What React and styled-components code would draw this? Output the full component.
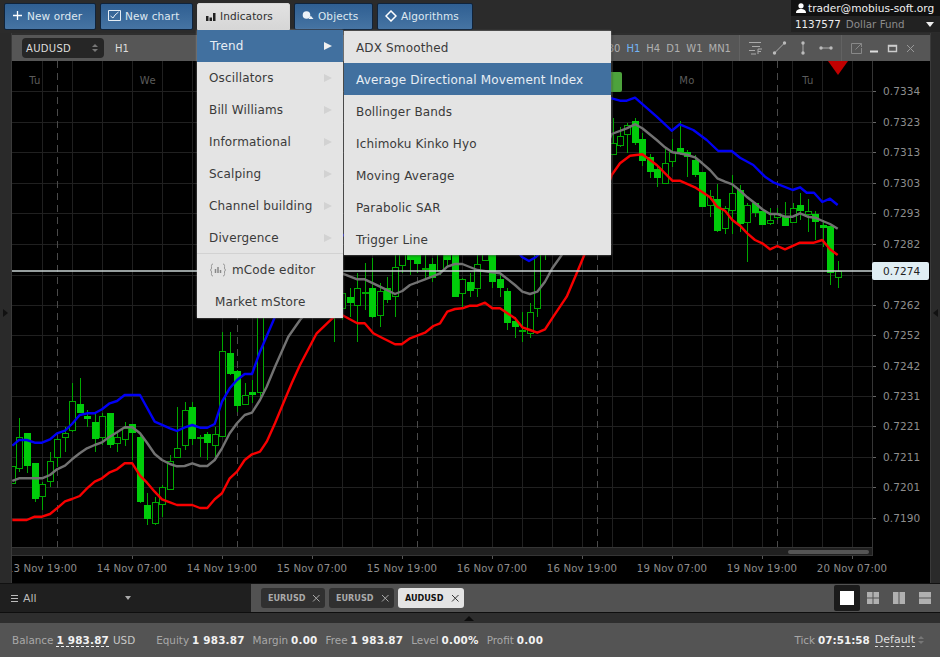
import React from 'react';
import styled, { createGlobalStyle } from 'styled-components';

const Global = createGlobalStyle`
  html, body { margin: 0; padding: 0; background: #2a2a2a; }
  * { box-sizing: border-box; }
  body { font-family: "DejaVu Sans", Verdana, sans-serif; }
`;

const Page = styled.div`
  position: relative; width: 940px; height: 657px; overflow: hidden;
  display: flex; flex-direction: column; background: #2a2a2a;
`;
const TopBar = styled.header`
  height: 33px; flex: none; display: flex; justify-content: space-between;
  background: #2b2b2b;
`;
const ToolButtons = styled.nav`
  display: flex; gap: 4px; padding: 3px 0 0 4px; align-items: flex-start;
`;
const ToolButton = styled.div`
  width: ${p => p.$w}px; height: 27px; display: flex; align-items: center; gap: 4px;
  padding: 0 0 2px ${p => p.$pad || 7}px; font-size: 10.5px; letter-spacing: 0.1px; white-space: nowrap;
  border-radius: ${p => (p.$open ? '2px 2px 0 0' : '2px')};
  color: ${p => (p.$open ? '#2e2e2e' : '#dfe8f0')};
  background: ${p => (p.$open ? 'linear-gradient(#e2e2e2,#d6d6d6)' : 'linear-gradient(#2f5f92,#4674a3)')};
  border: 1px solid ${p => (p.$open ? '#d8d8d8' : '#10233a')};
`;
const Account = styled.div`
  width: 149px; height: 32px; display: flex; flex-direction: column; font-size: 10.3px; background: #222;
`;
const AccountUser = styled.div`
  height: 16px; background: #111; color: #f0f0f0; display: flex; align-items: center; gap: 2px; padding-left: 5px; font-size: 10.6px; white-space: nowrap;
`;
const AccountFund = styled.div`
  height: 16px; color: #8c8c8c; display: flex; align-items: center; padding: 0 6px 0 4px; gap: 5px; position: relative; white-space: nowrap;
  b { color: #eee; font-weight: 400; }
  i { margin-left: auto; width: 0; height: 0; border: 4px solid transparent; border-top: 5px solid #eee; border-bottom: 0; }
`;
const Main = styled.main`
  height: 550px; flex: none; display: flex; background: #2e2e2e;
`;
const SideStrip = styled.aside`
  width: ${p => p.$w}px; flex: none; display: flex; align-items: flex-end; justify-content: center;
  padding-bottom: 266px; background: #2a2a2a; border-${p => p.$side}: 1px solid #3a3a3a;
  i { width: 0; height: 0; border: 4px solid transparent; border-${p => (p.$side === 'right' ? 'left' : 'right')}: 5px solid #111; border-${p => p.$side}: 0; }
`;
const ChartWindow = styled.section`
  flex: 1; margin-top: 2px; display: flex; flex-direction: column; min-width: 0; background: #000;
`;
const WindowHead = styled.div`
  height: 26px; flex: none; display: flex; align-items: center; background: #565656; color: #c8c8c8; font-size: 10px;
`;
const SymbolSelect = styled.div`
  width: 82px; height: 20px; margin-left: 10px; border-radius: 4px; background: #262626; color: #ddd; display: flex; align-items: center;
  justify-content: space-between; padding: 0 6px 0 4px; font-size: 10px; letter-spacing: .3px;
`;
const Updown = styled.span`
  display: flex; flex-direction: column; gap: 2px;
  &::before, &::after { content: ''; width: 0; height: 0; border: 3px solid transparent; }
  &::before { border-bottom: 3px solid #777; border-top: 0; }
  &::after { border-top: 3px solid #777; border-bottom: 0; }
`;
const Frame = styled.span`
  margin-left: 11px; color: #ddd;
`;
const Timeframes = styled.div`
  margin-left: auto; display: flex; gap: 6px; padding-right: 8px; height: 26px; align-items: center; border-right: 1px solid #626262;
`;
const Tf = styled.span`
  color: ${p => (p.$on ? '#72b4f5' : '#b0b0b0')};
`;
const DrawTools = styled.div`
  display: flex; align-items: center; height: 26px; border-right: 1px solid #626262; padding: 0 8px 0 9px; gap: 9px;
`;
const WinTools = styled.div`
  display: flex; align-items: center; height: 26px; padding: 0 14px 0 9px; gap: 7px;
`;
const Chart = styled.svg`
  display: block; width: 918px; height: 522px; flex: none; font-family: "DejaVu Sans", sans-serif;
`;
const Tabs = styled.div`
  height: 30px; flex: none; display: flex; border-top: 1px solid #111; border-bottom: 1px solid #0e0e0e;
`;
const FilterBox = styled.div`
  width: 251px; flex: none; background: #1f1f1f; color: #bbb; display: flex; align-items: center; padding-left: 11px; gap: 5px; font-size: 11px;
  i { margin-left: 83px; width: 0; height: 0; border: 3.5px solid transparent; border-top: 4px solid #aaa; border-bottom: 0; }
`;
const Burger = styled.span`
  width: 7px; height: 7px; border-top: 1px solid #bbb; border-bottom: 1px solid #bbb; position: relative;
  &::after { content: ''; position: absolute; left: 0; right: 0; top: 2px; height: 1px; background: #bbb; }
`;
const TabRail = styled.div`
  flex: 1; background: #525252; display: flex; align-items: center; padding: 0 0 0 10px; gap: 4px;
`;
const Tab = styled.div`
  width: ${p => p.$w}px; height: 20px; border-radius: 3px; display: flex; align-items: center; justify-content: space-between; padding: 0 4px 0 7px;
  font: bold 9px "DejaVu Sans Condensed", "Liberation Sans", sans-serif;
  background: ${p => (p.$on ? '#e4e4e4' : '#303030')}; color: ${p => (p.$on ? '#111' : '#aaa')};
`;
const Layouts = styled.div`
  margin-left: auto; display: flex; align-items: center; height: 28px; padding-right: 2px;
`;
const LayoutBtn = styled.div`
  width: 26px; height: 26px; display: flex; align-items: center; justify-content: center; border-radius: 2px;
  background: ${p => (p.$on ? '#1b1b1b' : 'transparent')};
`;
const Thin = styled.div`
  height: 10px; flex: none; background: #2e2e2e; display: flex; justify-content: center; padding: 3px 1px 0 0;
  i { width: 0; height: 0; border: 5px solid transparent; border-bottom: 5px solid #0d0d0d; border-top: 0; margin-left: -2px; }
`;
const Status = styled.footer`
  flex: 1; background: #545454; display: flex; align-items: center; padding: 0 0 0 12px; font-size: 10.4px; color: #a8a8a8; white-space: nowrap;
`;
const Stat = styled.span`
  margin-right: ${p => p.$gap || 8}px;
  b { color: #f2f2f2; font-weight: 700; margin-left: 3px; letter-spacing: .2px; ${p => p.$dash && 'border-bottom: 1px dashed #eee;'} }
  em { font-style: normal; color: #c8c8c8; margin-left: 4px; }
`;
const Tick = styled.span`
  margin-left: auto; color: #a8a8a8;
  b { color: #f2f2f2; margin-left: 3px; }
`;
const DefaultPick = styled.span`
  margin: 0 16px 0 5px; color: #ddd; display: flex; align-items: center; gap: 3px; font-size: 11px;
  u { text-decoration: none; border-bottom: 1px dashed #ddd; }
`;
const Menu = styled.div`
  position: absolute; left: ${p => p.$x}px; top: ${p => p.$y}px; width: ${p => p.$w}px;
  background: #e4e4e4; box-shadow: 0 0 2px rgba(255,255,255,.5), 1px 1px 2px rgba(0,0,0,.5);
  font-size: 12px; color: #333; letter-spacing: .15px;
`;
const MenuItem = styled.div`
  height: 32px; display: flex; align-items: center; gap: 5px; white-space: nowrap;
  padding: ${p => (p.$sub ? 1 : 0)}px 0 ${p => (p.$sub ? 0 : 1)}px ${p => p.$pad}px;
  background: ${p => (p.$on ? '#41709f' : 'transparent')}; color: ${p => (p.$on ? '#e8eef4' : '#3a3a3a')};
`;
const SubArrow = styled.i`
  margin-left: auto; margin-right: 11px; width: 0; height: 0; border: 4px solid transparent; border-right: 0;
  border-left: 8px solid ${p => (p.$on ? '#f0f0f0' : '#d2d2d2')};
`;
const MenuRule = styled.div`
  height: 1px; margin-top: -1px; background: #d2d2d2;
`;
const IconSvg = styled.svg`
  flex: none; display: block;
`;

const pts = (ox, oy, a) => a.map(([x, y]) => [ox + x / 3, oy + y / 3]);
const blue = [
  ...pts(0, 300, [[37,437],[57,420],[80,420],[104,428],[126,428],[150,418],[171,400],[195,392],[216,372],[239,345],[261,340],[284,340],[306,328],[329,310],[351,303],[374,285],[420,285],[464,365],[510,385],[531,393],[554,382],[577,375],[600,383],[622,383],[644,372],[666,305],[689,265],[711,240],[734,222],[756,222],[780,155],[825,50]]),
  [343,235],[515,248],[522,257],[529,261],[536,257],[545,248],[590,110],
  ...pts(610, 60, [[5,115],[30,122],[50,122],[75,113],[140,170],[185,212],[209,193],[250,210],[290,240],[325,273],[365,273],[390,293],[430,315],[465,350],[490,367],[548,390],[570,382],[590,398],[612,398],[637,426],[660,416],[683,435]]),
];
const gray = [
  ...pts(0, 300, [[37,543],[57,535],[126,535],[150,525],[171,508],[195,497],[216,478],[239,460],[261,445],[284,435],[306,427],[329,410],[351,397],[374,382],[397,382],[420,400],[441,428],[464,462],[486,480],[510,492],[531,499],[554,498],[577,490],[600,498],[622,498],[644,480],[666,445],[689,400],[711,370],[734,345],[756,338],[780,300],[800,260],[825,200],[865,110],[900,60]]),
  ...pts(300, 240, [[126,100],[172,118],[194,118],[240,140],[285,162],[307,153],[330,135],[375,118],[420,100],[442,80],[465,72],[487,72],[532,90],[577,97],[600,100],[645,135],[667,155],[690,162],[712,155],[735,125],[757,85],[785,45]]),
  ...pts(610, 60, [[5,222],[50,205],[75,193],[97,205],[140,240],[165,262],[187,277],[209,280],[232,285],[255,292],[277,310],[300,330],[322,355],[345,365],[367,373],[390,392],[412,412],[435,430],[457,448],[480,462],[502,462],[525,470],[548,470],[570,460],[593,470],[615,473],[638,483],[660,492],[683,506]]),
];
const red = [
  ...pts(0, 300, [[37,660],[80,660],[104,650],[126,650],[150,642],[171,625],[195,604],[216,597],[239,588],[261,565],[284,545],[306,535],[329,517],[351,508],[374,490],[397,490],[420,527],[441,548],[464,575],[486,598],[510,607],[531,615],[577,615],[600,624],[622,624],[644,598],[666,580],[689,535],[711,515],[734,480],[756,463],[780,455],[800,425],[825,370],[850,310],[875,250],[900,195]]),
  ...pts(300, 240, [[50,280],[100,232],[126,225],[172,250],[194,250],[220,280],[240,290],[285,313],[305,313],[330,295],[375,278],[400,258],[420,250],[442,215],[465,207],[487,205],[510,197],[532,197],[555,188],[577,205],[600,205],[645,235],[667,262],[690,270],[712,278],[735,268],[760,230],[800,170],[830,100],[855,40]]),
  ...pts(610, 60, [[5,345],[30,310],[60,287],[97,283],[140,315],[187,362],[209,362],[255,382],[300,412],[322,440],[345,452],[367,480],[390,497],[412,520],[435,540],[457,550],[480,568],[502,558],[525,568],[570,548],[612,548],[637,540],[660,568],[683,585]]),
];

// [x, high, low, bodyTop, bodyBottom, filled] in zoomed-crop units
const candlesA = [[37,498,552,498,550,0],[57,355,515,410,505,0],[80,400,518,400,498,1],[104,488,605,490,597,1],[126,545,630,553,588,0],[150,455,560,482,543,0],[171,415,500,418,470,0],[195,380,455,400,410,0],[216,250,395,304,390,0],[239,233,340,312,338,1],[261,330,380,348,357,1],[284,340,455,365,417,1],[306,340,435,348,410,0],[329,338,445,338,435,1],[351,395,455,410,428,0],[374,365,438,385,417,0],[397,375,480,373,400,1],[420,405,610,410,605,1],[441,580,675,615,658,1],[464,590,675,606,668,0],[486,555,650,562,612,0],[509,465,570,482,568,0],[531,320,475,445,472,0],[554,305,450,330,435,0],[577,305,435,320,417,1],[600,405,472,410,411,0],[622,395,480,402,428,1],[644,380,480,402,436,0],[666,97,410,152,407,0],[689,97,225,160,222,1],[711,210,335,213,318,1],[734,250,312,286,312,0],[756,240,310,276,286,1],[780,-100,290,-20,275,0]];
const candlesB = [[103,30,305,60,180,1],[126,110,240,160,205,0],[150,145,230,170,188,1],[172,100,305,145,195,0],[194,70,210,155,156,0],[216,55,235,145,232,1],[240,130,260,153,225,0],[262,110,190,145,180,1],[285,20,230,82,168,0],[307,20,100,20,75,0],[330,20,105,20,60,1],[352,20,100,20,72,1],[375,20,115,83,84,0],[397,55,125,72,115,1],[420,20,105,20,90,0],[442,20,80,20,60,1],[465,20,170,20,170,1],[487,115,205,118,160,0],[510,100,170,125,152,1],[532,45,170,72,145,0],[555,20,60,20,60,0],[577,20,145,20,125,1],[600,100,170,117,145,1],[622,145,270,152,250,1],[645,230,293,242,262,1],[667,215,305,270,271,0],[690,190,295,215,278,0],[712,20,230,20,205,0],[735,0,60,0,40,1]];
const candlesC = [[8,175,285,248,282,0],[30,200,262,228,256,0],[52,190,280,195,222,0],[75,175,255,183,248,1],[97,220,318,238,302,1],[120,283,355,292,335,1],[142,315,382,328,354,1],[165,268,372,310,370,0],[187,238,320,276,302,0],[209,183,285,265,283,1],[232,270,352,275,292,1],[255,285,352,300,345,1],[277,336,441,336,441,1],[300,390,470,408,434,0],[322,372,515,416,514,1],[345,438,522,443,505,0],[367,345,522,398,450,0],[390,375,515,390,493,1],[412,430,605,435,487,0],[435,425,470,428,460,1],[457,452,495,452,495,1],[480,445,495,480,490,0],[502,443,480,460,470,0],[525,425,498,470,497,1],[548,428,490,443,487,0],[570,398,480,434,452,1],[593,418,515,452,462,0],[615,452,540,461,487,1],[638,480,560,496,505,1],[660,497,675,497,638,1],[683,603,683,632,650,0]];
const toCandles = (ox, oy, list) => list.map(([x, h, l, t, b, f]) => ({
  x: Math.round(ox + x / 3), h: oy + h / 3, l: oy + l / 3, t: Math.round(oy + t / 3), b: Math.round(oy + b / 3), f,
}));
const candles = [...toCandles(0, 300, candlesA), ...toCandles(300, 240, candlesB), ...toCandles(610, 60, candlesC)];

const hGrid = [91, 122, 152, 183, 213, 244, 275, 305, 335, 366, 396, 426, 457, 487, 518];
const prices = [['0.7334',91],['0.7323',122],['0.7313',152],['0.7303',183],['0.7293',213],['0.7282',244],['0.7262',305],['0.7252',335],['0.7242',366],['0.7231',396],['0.7221',426],['0.7211',457],['0.7201',487],['0.7190',518]];
const vGrid = Array.from({ length: 28 }, (_, i) => 42 + i * 30);
const dashes = [57, 237, 417, 597, 777];
const times = [['13 Nov 19:00',42],['14 Nov 07:00',132],['14 Nov 19:00',222],['15 Nov 07:00',312],['15 Nov 19:00',402],['16 Nov 07:00',492],['16 Nov 19:00',582],['19 Nov 07:00',672],['19 Nov 19:00',762],['20 Nov 07:00',852]];
const days = [['Tu',35],['We',148],['Mo',687],['Tu',808]];
const poly = a => a.map(p => p.map(n => n.toFixed(1)).join(',')).join(' ');

function ChartPlot() {
  return (
    <Chart viewBox="12 61 918 522">
      <rect x="12" y="61" width="918" height="522" fill="#000" />
      <g stroke="#202020" strokeWidth="1" shapeRendering="crispEdges">
        {hGrid.map(y => <line key={y} x1="12" x2="872" y1={y + .5} y2={y + .5} />)}
        {vGrid.map(x => <line key={x} x1={x + .5} x2={x + .5} y1="61" y2="547" />)}
      </g>
      <g stroke="#4a4a4a" strokeDasharray="7 5" shapeRendering="crispEdges">
        {dashes.map(x => <line key={x} x1={x + .5} x2={x + .5} y1="61" y2="547" />)}
      </g>
      {days.map(([t, x]) => <text key={x + t} x={x} y="84" textAnchor="middle" fontSize="10" fill="#5c5c5c" letterSpacing=".4">{t}</text>)}
      <rect x="590" y="72" width="32" height="20" rx="2" fill="#4da23c" />
      <g shapeRendering="crispEdges">
        {candles.map((c, i) => (
          <g key={i}>
            <line x1={c.x + .5} x2={c.x + .5} y1={c.h} y2={c.l} stroke="#00a800" />
            {c.f
              ? <rect x={c.x - 3} y={c.t} width="7" height={Math.max(c.b - c.t, 1)} fill="#00cc0a" />
              : <rect x={c.x - 2.5} y={c.t + .5} width="6" height={Math.max(c.b - c.t, 1)} fill="#000" stroke="#00a800" />}
          </g>
        ))}
      </g>
      <polyline points={poly(blue)} fill="none" stroke="#0000f5" strokeWidth="2.4" strokeLinejoin="round" />
      <polyline points={poly(gray)} fill="none" stroke="#727272" strokeWidth="2.4" strokeLinejoin="round" />
      <polyline points={poly(red)} fill="none" stroke="#f80000" strokeWidth="2.4" strokeLinejoin="round" />
      <line x1="12" x2="872" y1="271" y2="271" stroke="#c9d3d3" strokeWidth="1.4" />
      <path d="M828 61 h20 l-10 14z" fill="#c10000" />
      <rect x="12" y="547" width="860" height="9" fill="#202020" />
      <rect x="788" y="550" width="81" height="4" rx="2" fill="#555" />
      <g shapeRendering="crispEdges" stroke="#353535">
        <line x1="872.5" x2="872.5" y1="61" y2="556" />
        <line x1="12" x2="872" y1="547.5" y2="547.5" />
        <line x1="12" x2="872" y1="555.5" y2="555.5" />
      </g>
      {prices.map(([t, y]) => (
        <g key={t}>
          <line x1="873" x2="876" y1={y + .5} y2={y + .5} stroke="#666" />
          <text x="883" y={y + 4} fontSize="10.5" fill="#8e8e8e" letterSpacing=".1">{t}</text>
        </g>
      ))}
      <rect x="872" y="262" width="57" height="18" rx="2" fill="#e0eef3" />
      <text x="883" y="275" fontSize="10.5" fill="#222" letterSpacing=".1">0.7274</text>
      {times.map(([t, x]) => (
        <g key={t}>
          <line x1={x + .5} x2={x + .5} y1="556" y2="559" stroke="#555" />
          <text x={x} y="572" textAnchor="middle" fontSize="10.2" fill="#8e8e8e" letterSpacing=".15">{t}</text>
        </g>
      ))}
    </Chart>
  );
}

const Ico = ({ w = 14, h = 14, children }) => (
  <IconSvg width={w} height={h} viewBox={`0 0 ${w} ${h}`} fill="none">{children}</IconSvg>
);

const Close = ({ c }) => (
  <Ico w={10} h={10}><path d="M2 2l6.5 6.5M8.5 2L2 8.500" stroke={c} strokeWidth="1" /></Ico>
);
const Grid4 = () => <Ico w={14} h={14}><path d="M1 1h5.500v5.500H1zM7.500 1H13v5.500H7.500zM1 7.500h5.500V13H1zM7.500 7.500H13V13H7.500z" fill="#b0b0b0" /></Ico>;
const Cols = () => <Ico w={14} h={14}><path d="M1 1h5.500v12H1zM7.500 1H13v12H7.500z" fill="#b0b0b0" /></Ico>;
const Rows = () => <Ico w={14} h={14}><path d="M1 1h12v5.500H1zM1 7.500h12V13H1z" fill="#b0b0b0" /></Ico>;

export default function App() {
  return (
    <Page>
      <Global />
      <TopBar>
        <ToolButtons>
          <ToolButton $w={92}>
            <Ico w={11} h={11}><path d="M5.500 1v9M1 5.500h9" stroke="#fff" strokeWidth="1.300" /></Ico>New order
          </ToolButton>
          <ToolButton $w={93}>
            <Ico w={13} h={13}><path d="M.5 1.500h12v10H.5z" stroke="#e6eef5" /><path d="M2.500 7l2.500 2 2-3 3.500-3" stroke="#e6eef5" /></Ico>New chart
          </ToolButton>
          <ToolButton $w={93} $open>
            <Ico w={11} h={11}><path d="M1 6h2.500v5H1zM4.500 7.500H7V11H4.500zM8 3h2.500v8H8z" fill="#222" /></Ico>Indicators
          </ToolButton>
          <ToolButton $w={79} $pad={7}>
            <Ico w={12} h={12}><circle cx="4.500" cy="5" r="3.800" fill="#eef3f8" /><path d="M2 9h9.500l-2.500-3-1 .5-1.500 2.500z" fill="#eef3f8" /></Ico>Objects
          </ToolButton>
          <ToolButton $w={96} $pad={7}>
            <Ico w={12} h={12}><path d="M6 1l5 5-5 5-5-5z" stroke="#fff" strokeWidth="1.500" /></Ico>Algorithms
          </ToolButton>
        </ToolButtons>
        <Account>
          <AccountUser>
            <Ico w={10} h={10}><circle cx="5" cy="2.800" r="2.600" fill="#fff" /><path d="M0 10c0-3 2.200-4 5-4s5 1 5 4z" fill="#fff" /></Ico>
            trader@mobius-soft.org
          </AccountUser>
          <AccountFund><b>1137577</b> Dollar Fund<i /></AccountFund>
        </Account>
      </TopBar>

      <Main>
        <SideStrip $w={12} $side="right"><i /></SideStrip>
        <ChartWindow>
          <WindowHead>
            <SymbolSelect>AUDUSD<Updown /></SymbolSelect>
            <Frame>H1</Frame>
            <Timeframes>
              <Tf>M30</Tf><Tf $on>H1</Tf><Tf>H4</Tf><Tf>D1</Tf><Tf>W1</Tf><Tf>MN1</Tf>
            </Timeframes>
            <DrawTools>
              <Ico w={14} h={14}><path d="M0 1.500h12M3 5.500h8M0 9.500h6M2 13h5" stroke="#aaa" /><path d="M9 13V8h4M9 10.500h3" stroke="#aaa" /></Ico>
              <Ico w={15} h={14}><path d="M2.500 12L12 2.500" stroke="#aaa" /><circle cx="2.500" cy="12" r="1.700" fill="#bbb" /><circle cx="12.500" cy="2" r="1.700" fill="#bbb" /></Ico>
              <Ico w={14} h={14}><path d="M7 2v10" stroke="#aaa" /><circle cx="7" cy="2" r="1.700" fill="#bbb" /><circle cx="7" cy="12" r="1.700" fill="#bbb" /></Ico>
              <Ico w={14} h={14}><path d="M2 7h10" stroke="#aaa" /><circle cx="2" cy="7" r="1.700" fill="#bbb" /><circle cx="12" cy="7" r="1.700" fill="#bbb" /></Ico>
            </DrawTools>
            <WinTools>
              <Ico w={11} h={11}><path d="M7 .5H.5v10h10V5" stroke="#888" /><path d="M4.500 6.500L10.500.5M7 .5h3.500V4" stroke="#888" /></Ico>
              <Ico w={11} h={11}><path d="M1 8.500h8" stroke="#ddd" strokeWidth="2" /></Ico>
              <Ico w={11} h={11}><path d="M1.500 2.500h8v6h-8z" stroke="#ccc" strokeWidth="1.400" /><path d="M1 3h9" stroke="#ccc" strokeWidth="1.500" /></Ico>
              <Ico w={11} h={11}><path d="M2 2l7 7M9 2l-7 7" stroke="#999" /></Ico>
            </WinTools>
          </WindowHead>
          <ChartPlot />
        </ChartWindow>
        <SideStrip $w={10} $side="left"><i /></SideStrip>
      </Main>

      <Tabs>
        <FilterBox><Burger />All<i /></FilterBox>
        <TabRail>
          <Tab $w={64}>EURUSD<Close c="#aaa" /></Tab>
          <Tab $w={65}>EURUSD<Close c="#aaa" /></Tab>
          <Tab $w={66} $on>AUDUSD<Close c="#333" /></Tab>
          <Layouts>
            <LayoutBtn $on><Ico w={14} h={14}><path d="M0 0h14v14H0z" fill="#fff" /></Ico></LayoutBtn>
            <LayoutBtn><Grid4 /></LayoutBtn>
            <LayoutBtn><Cols /></LayoutBtn>
            <LayoutBtn><Rows /></LayoutBtn>
          </Layouts>
        </TabRail>
      </Tabs>
      <Thin><i /></Thin>
      <Status>
        <Stat $dash $gap={21}>Balance<b>1 983.87</b><em>USD</em></Stat>
        <Stat>Equity<b>1 983.87</b></Stat>
        <Stat>Margin<b>0.00</b></Stat>
        <Stat>Free<b>1 983.87</b></Stat>
        <Stat>Level<b>0.00%</b></Stat>
        <Stat>Profit<b>0.00</b></Stat>
        <Tick>Tick<b>07:51:58</b></Tick>
        <DefaultPick><u>Default</u><Updown /></DefaultPick>
      </Status>

      <Menu $x={197} $y={30} $w={146}>
        <MenuItem $pad={13} $on>Trend<SubArrow $on /></MenuItem>
        <MenuItem $pad={12}>Oscillators<SubArrow /></MenuItem>
        <MenuItem $pad={12}>Bill Williams<SubArrow /></MenuItem>
        <MenuItem $pad={12}>Informational<SubArrow /></MenuItem>
        <MenuItem $pad={12}>Scalping<SubArrow /></MenuItem>
        <MenuItem $pad={12}>Channel building<SubArrow /></MenuItem>
        <MenuItem $pad={12}>Divergence<SubArrow /></MenuItem>
        <MenuRule />
        <MenuItem $pad={12}>
          <Ico w={18} h={14}><path d="M4 1C2 1 2.500 3 2.500 5S1 7 1 7s1.500 0 1.500 2S2 13 4 13M14 1c2 0 1.500 2 1.500 4s1.500 2 1.500 2-1.500 0-1.500 2 .5 4-1.500 4" stroke="#999" /><path d="M6.500 6v4M9 4v6M11.500 7v3" stroke="#888" strokeWidth="1.500" /></Ico>
          mCode editor
        </MenuItem>
        <MenuItem $pad={18}>Market mStore</MenuItem>
      </Menu>
      <Menu $x={344} $y={31} $w={267}>
        <MenuItem $sub $pad={12}>ADX Smoothed</MenuItem>
        <MenuItem $sub $pad={12} $on>Average Directional Movement Index</MenuItem>
        <MenuItem $sub $pad={12}>Bollinger Bands</MenuItem>
        <MenuItem $sub $pad={12}>Ichimoku Kinko Hyo</MenuItem>
        <MenuItem $sub $pad={12}>Moving Average</MenuItem>
        <MenuItem $sub $pad={12}>Parabolic SAR</MenuItem>
        <MenuItem $sub $pad={12}>Trigger Line</MenuItem>
      </Menu>
    </Page>
  );
}
